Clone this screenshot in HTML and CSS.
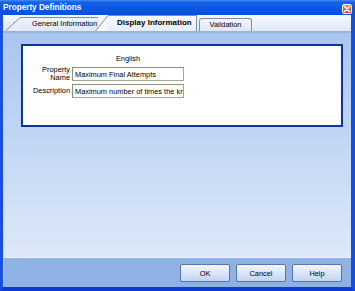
FILE: index.html
```html
<!DOCTYPE html>
<html>
<head>
<meta charset="utf-8">
<link rel="stylesheet" href="styles.css">
</head>
<body>
<div class="window">
  <div class="titlebar">
    <span class="title">Property Definitions</span>
    <span class="close">
      <svg width="8" height="8" viewBox="0 0 8 8"><path d="M1.5 1.5 L6.5 6.5 M6.5 1.5 L1.5 6.5" stroke="#fff" stroke-width="1.6" stroke-linecap="round"/></svg>
    </span>
  </div>
  <div class="frame">
    <div class="tabstrip">
      <div class="tab tab-general">
        <svg class="slant" width="15" height="14" viewBox="0 0 15 14"><polygon points="0,14 15,0 15,14" class="slant-fill"/><line x1="0.5" y1="14" x2="15" y2="0.5" class="slant-line"/></svg>
        <div class="tab-body">General Information</div>
      </div>
      <div class="tab tab-active">
        <svg class="slant" width="13" height="16" viewBox="0 0 13 16"><polygon points="0,16 13,0 13,16" class="slant-fill-active"/><line x1="0.5" y1="16" x2="13" y2="0.5" class="slant-line"/></svg>
        <div class="tab-body">Display Information</div>
      </div>
      <div class="tab tab-plain">Validation</div>
    </div>
    <div class="panel">
      <div class="card">
        <div class="grid">
          <div></div>
          <div class="col-head">English</div>
          <div class="lbl">Property<br>Name</div>
          <input class="field" type="text" value="Maximum Final Attempts">
          <div class="lbl">Description</div>
          <input class="field" type="text" value="Maximum number of times the knowledge check can be attempted">
        </div>
      </div>
    </div>
    <div class="buttons">
      <button class="btn">OK</button>
      <button class="btn">Cancel</button>
      <button class="btn">Help</button>
    </div>
  </div>
</div>
</body>
</html>
```

FILE: styles.css
```css
* { box-sizing: border-box; }
html, body { margin: 0; padding: 0; }
body {
  font-family: "Liberation Sans", Arial, sans-serif;
  font-size: 7.4px;
  color: #000;
  background: #fff;
}
.window {
  width: 355px;
  height: 291px;
  display: flex;
  flex-direction: column;
  background: #0d47dc;
}
.titlebar {
  height: 15px;
  flex: none;
  display: flex;
  align-items: center;
  justify-content: space-between;
  padding: 0 3px 0 3px;
  background: linear-gradient(#4a8ef6 0, #1662ea 2px, #0a58e4 50%, #0a50dc 100%);
}
.title {
  color: #fff;
  font-weight: bold;
  font-size: 8.2px;
  line-height: 10px;
  letter-spacing: 0;
}
.close {
  width: 10px;
  height: 10px;
  margin-top: 2px;
  border: 1px solid #fff;
  border-radius: 2px;
  background: linear-gradient(#f08a5a, #e0542c 60%, #c8401c);
  display: flex;
  align-items: center;
  justify-content: center;
}
.close svg { display: block; }
.frame {
  flex: 1;
  display: flex;
  flex-direction: column;
  border-left: 3px solid #1a4ee2;
  border-right: 4px solid #1a4ee2;
  border-bottom: 4px solid #0b3cd6;
  min-height: 0;
}
.tabstrip {
  height: 18px;
  flex: none;
  display: flex;
  align-items: flex-end;
  padding-left: 2px;
  padding-bottom: 2px;
  background: linear-gradient(#f6f9fe, #dfe8f8 88%, #9bb3df 88%, #9bb3df);
}
.tab {
  display: flex;
  align-items: stretch;
  position: relative;
  color: #000;
}
.slant { display: block; flex: none; }
.slant-fill { fill: #e6edf9; }
.slant-fill-active { fill: #f4f7fd; }
.slant-line { stroke: #7a8cb2; stroke-width: 1; }
.tab-general { height: 14px; z-index: 1; }
.tab-general .tab-body {
  width: 78px;
  padding-left: 12px;
  border-top: 1px solid #7a8cb2;
  background: linear-gradient(#eef3fb, #dfe7f6);
  line-height: 12px;
  white-space: nowrap;
}
.tab-active { height: 16px; margin-left: -3px; z-index: 2; }
.tab-active .tab-body {
  width: 89px;
  padding-left: 9px;
  border-top: 1px solid #7a8cb2;
  border-right: 1px solid #7a8cb2;
  background: linear-gradient(#f8fafe, #e6edf9);
  font-weight: bold;
  font-size: 8px;
  line-height: 14px;
  white-space: nowrap;
}
.tab-plain {
  height: 13px;
  width: 53px;
  margin-left: 2px;
  border: 1px solid #7a8cb2;
  border-bottom: none;
  border-radius: 3px 3px 0 0;
  background: linear-gradient(#f2f6fd, #dfe7f6);
  justify-content: center;
  line-height: 12px;
}
.panel {
  flex: 1;
  padding: 11px 8px 0 17px;
  background: linear-gradient(#a9c6ef, #dde9fa);
  border-left: 1px solid #c5d8f5;
  border-bottom: 1px solid #eef4fd;
}
.card {
  height: 83px;
  border: 2px solid #12329c;
  background: #fff;
}
.grid {
  display: grid;
  grid-template-columns: 47px 112px;
  column-gap: 2px;
  row-gap: 2px;
  align-items: center;
  padding-top: 8px;
}
.col-head {
  text-align: center;
  line-height: 9px;
  margin-bottom: 1px;
}
.lbl {
  text-align: right;
  line-height: 8px;
}
.field {
  width: 112px;
  height: 14px;
  margin: 0;
  padding: 0 0 0 2px;
  border: 1px solid #a7a592;
  border-top-color: #8f8d7c;
  border-left-color: #8f8d7c;
  background: #fff;
  font-family: "Liberation Sans", Arial, sans-serif;
  font-size: 7.4px;
  color: #000;
  outline: none;
}
.buttons {
  height: 29px;
  flex: none;
  display: flex;
  justify-content: flex-end;
  align-items: flex-start;
  gap: 6px;
  padding: 6px 9px 0 0;
  background: #8fb1e4;
  border-left: 1px solid #b4cbf0;
}
.btn {
  width: 50px;
  height: 18px;
  margin: 0;
  padding: 0;
  border: 1px solid #5874b4;
  border-radius: 2px;
  background: linear-gradient(#f2f6fd, #d6e2f6 60%, #c2d4f0);
  font-family: "Liberation Sans", Arial, sans-serif;
  font-size: 7.4px;
  color: #000;
}
```
